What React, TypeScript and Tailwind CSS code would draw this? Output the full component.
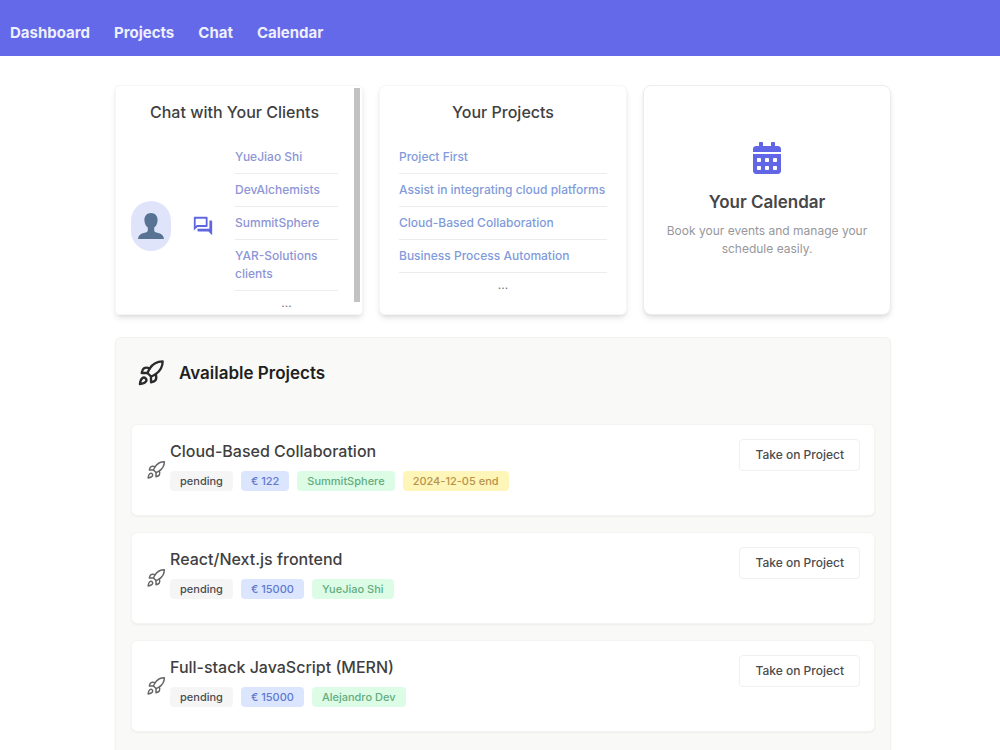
import type { ReactNode } from "react";
import { Rocket } from "lucide-react";
import { FaCalendarAlt } from "react-icons/fa";
import { MdOutlineForum } from "react-icons/md";

const navItems = ["Dashboard", "Projects", "Chat", "Calendar"];
const clients = ["YueJiao Shi", "DevAlchemists", "SummitSphere", "YAR-Solutions clients"];
const ownProjects = [
  "Project First",
  "Assist in integrating cloud platforms",
  "Cloud-Based Collaboration",
  "Business Process Automation",
];

type Project = { title: string; price: string; client: string; end?: string };

const available: Project[] = [
  { title: "Cloud-Based Collaboration", price: "€ 122", client: "SummitSphere", end: "2024-12-05 end" },
  { title: "React/Next.js frontend", price: "€ 15000", client: "YueJiao Shi" },
  { title: "Full-stack JavaScript (MERN)", price: "€ 15000", client: "Alejandro Dev" },
];

function Avatar() {
  return (
    <span className="flex h-[50px] w-10 shrink-0 items-center justify-center rounded-full bg-[#dfe4fb]">
      <svg viewBox="0 0 28 28" className="size-7" aria-hidden="true">
        <path
          d="M14 1c-4 0-6.600 2.800-6.600 7 0 3.200 1.400 6 3.400 7.500v2.700c0 1.200-.8 1.900-2.400 2.400-3.800 1.100-6.900 2-7.400 6.400h26c-.5-4.400-3.600-5.300-7.400-6.400-1.600-.5-2.400-1.200-2.400-2.400v-2.700c2-1.500 3.400-4.300 3.400-7.500 0-4.200-2.600-7-6.600-7z"
          fill="#587294"
        />
      </svg>
    </span>
  );
}

function LinkList({ items, tone }: { items: string[]; tone: string }) {
  return (
    <ul className="text-xs leading-[18px] font-medium">
      {items.map((item) => (
        <li key={item} className="border-b border-[#ececee] py-[7px]">
          <a href="#" className={tone}>
            {item}
          </a>
        </li>
      ))}
    </ul>
  );
}

function Tag({ tone, children }: { tone: string; children: ReactNode }) {
  return <span className={`rounded px-2.5 py-0.5 text-[11px] leading-4 font-medium ${tone}`}>{children}</span>;
}

function ProjectRow({ project }: { project: Project }) {
  return (
    <li className="flex min-h-[92px] rounded-md border border-[#f4f4f3] bg-white pt-3.5 pr-3.5 pl-3.5 shadow-xs">
      <Rocket className="mt-[21px] mr-1 size-5 shrink-0 text-[#666]" strokeWidth={1.75} />
      <div className="min-w-0 grow">
        <h3 className="text-base leading-6 font-medium text-[#3f3f42]">{project.title}</h3>
        <div className="mt-2 flex flex-wrap gap-2">
          <Tag tone="bg-[#f5f5f5] text-[#4b4b4e]">pending</Tag>
          <Tag tone="bg-[#dbe6fe] text-[#6079cf]">{project.price}</Tag>
          <Tag tone="bg-[#dcfce6] text-[#62ac80]">{project.client}</Tag>
          {project.end && <Tag tone="bg-[#fef5b8] text-[#b8934a]">{project.end}</Tag>}
        </div>
      </div>
      <button
        type="button"
        className="h-8 shrink-0 rounded border border-[#f0f0f1] bg-white px-[15px] text-xs font-medium text-[#4b4b4e]"
      >
        Take on Project
      </button>
    </li>
  );
}

export default function App() {
  return (
    <div className="min-h-screen bg-white font-['Inter',sans-serif]">
      <header className="bg-[#6369e8]">
        <nav className="flex h-14 items-center gap-6 px-2.5 pt-2.5 text-[15px] font-bold text-[#eeefff]">
          {navItems.map((item) => (
            <a key={item} href="#">
              {item}
            </a>
          ))}
        </nav>
      </header>

      <main className="pt-[29px] pr-[109px] pl-[115px]">
        <div className="grid grid-cols-3 gap-4">
          <section className="flex min-h-[230px] rounded-sm border border-[#f6f6f7] bg-white shadow-md">
            <div className="flex grow flex-col pl-[15px]">
              <h2 className="pt-4 text-center text-base leading-5 font-medium text-[#3f3f42]">
                Chat with Your Clients
              </h2>
              <div className="mt-[19px] flex items-center">
                <Avatar />
                <MdOutlineForum className="ml-[21px] size-[22px] shrink-0 text-[#6066e0]" />
                <div className="ml-[21px] grow">
                  <LinkList items={clients} tone="text-[#8e95d6]" />
                  <p className="pt-1 text-center text-xs leading-4 text-[#77777c]">...</p>
                </div>
              </div>
            </div>
            <div className="mt-0.5 mr-0.5 ml-4 h-[214px] w-1.5 shrink-0 bg-[#c2c2c2]" />
          </section>

          <section className="min-h-[230px] rounded-md border border-[#f6f6f7] bg-white px-[19px] shadow-md">
            <h2 className="pt-4 text-center text-base leading-5 font-medium text-[#3f3f42]">Your Projects</h2>
            <div className="pt-[19px]">
              <LinkList items={ownProjects} tone="whitespace-nowrap text-[#7f9bdb]" />
              <p className="pt-1 text-center text-xs leading-4 text-[#77777c]">...</p>
            </div>
          </section>

          <section className="flex min-h-[230px] flex-col items-center rounded-lg border border-[#ececee] bg-white px-4 pt-14 text-center shadow-md">
            <FaCalendarAlt className="size-8 text-[#6166e6]" />
            <h2 className="mt-3.5 text-[17px] leading-7 font-semibold text-[#47474a]">Your Calendar</h2>
            <p className="mt-1.5 text-xs leading-[18px] text-[#97979b]">
              Book your events and manage your schedule easily.
            </p>
          </section>
        </div>

        <section className="mt-[22px] rounded-md border border-[#f2f2f1] bg-[#f9f9f8] px-[15px] pb-8 shadow-xs">
          <div className="flex h-[86px] items-start gap-3.5 pt-[21px] pl-1.5">
            <Rocket className="size-7 text-[#2b2b2e]" />
            <h2 className="text-[17px] leading-7 font-semibold text-[#1f1f22]">Available Projects</h2>
          </div>
          <ul className="flex flex-col gap-4">
            {available.map((project) => (
              <ProjectRow key={project.title} project={project} />
            ))}
          </ul>
        </section>
      </main>
    </div>
  );
}
